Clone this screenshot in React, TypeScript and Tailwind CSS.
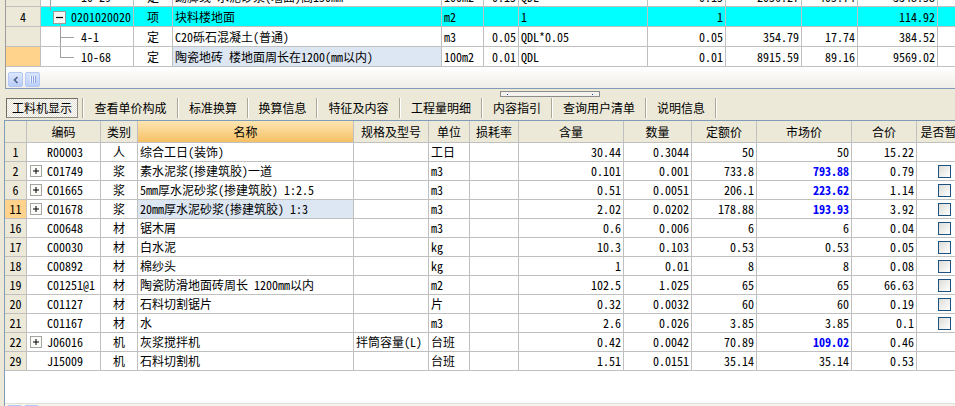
import React from 'react'

type MatRow = {
  n: string
  code: string
  plus?: boolean
  type: string
  name: string
  spec?: string
  unit: string
  hl: string
  sl: string
  de: string
  mk: string
  blue?: boolean
  total: string
  cb?: boolean
  sel?: boolean
}

const rows: MatRow[] = [
  { n: '1', code: 'R00003', type: '人', name: '综合工日(装饰)', unit: '工日', hl: '30.44', sl: '0.3044', de: '50', mk: '50', total: '15.22' },
  { n: '2', code: 'C01749', plus: true, type: '浆', name: '素水泥浆(掺建筑胶)一道', unit: 'm3', hl: '0.101', sl: '0.001', de: '733.8', mk: '793.88', blue: true, total: '0.79', cb: true },
  { n: '6', code: 'C01665', plus: true, type: '浆', name: '5mm厚水泥砂浆(掺建筑胶) 1:2.5', unit: 'm3', hl: '0.51', sl: '0.0051', de: '206.1', mk: '223.62', blue: true, total: '1.14', cb: true },
  { n: '11', code: 'C01678', plus: true, type: '浆', name: '20mm厚水泥砂浆(掺建筑胶) 1:3', unit: 'm3', hl: '2.02', sl: '0.0202', de: '178.88', mk: '193.93', blue: true, total: '3.92', cb: true, sel: true },
  { n: '16', code: 'C00648', type: '材', name: '锯木屑', unit: 'm3', hl: '0.6', sl: '0.006', de: '6', mk: '6', total: '0.04', cb: true },
  { n: '17', code: 'C00030', type: '材', name: '白水泥', unit: 'kg', hl: '10.3', sl: '0.103', de: '0.53', mk: '0.53', total: '0.05', cb: true },
  { n: '18', code: 'C00892', type: '材', name: '棉纱头', unit: 'kg', hl: '1', sl: '0.01', de: '8', mk: '8', total: '0.08', cb: true },
  { n: '19', code: 'C01251@1', type: '材', name: '陶瓷防滑地面砖周长 1200mm以内', unit: 'm2', hl: '102.5', sl: '1.025', de: '65', mk: '65', total: '66.63', cb: true },
  { n: '20', code: 'C01127', type: '材', name: '石料切割锯片', unit: '片', hl: '0.32', sl: '0.0032', de: '60', mk: '60', total: '0.19', cb: true },
  { n: '21', code: 'C01167', type: '材', name: '水', unit: 'm3', hl: '2.6', sl: '0.026', de: '3.85', mk: '3.85', total: '0.1', cb: true },
  { n: '22', code: 'J06016', plus: true, type: '机', name: '灰浆搅拌机', spec: '拌筒容量(L)', unit: '台班', hl: '0.42', sl: '0.0042', de: '70.89', mk: '109.02', blue: true, total: '0.46' },
  { n: '29', code: 'J15009', type: '机', name: '石料切割机', unit: '台班', hl: '1.51', sl: '0.0151', de: '35.14', mk: '35.14', total: '0.53' },
]

const headers = ['', '编码', '类别', '名称', '规格及型号', '单位', '损耗率', '含量', '数量', '定额价', '市场价', '合价', '是否暂定']

const tabs = [
  { label: '查看单价构成', w: 'w-[93px]' },
  { label: '标准换算', w: 'w-[68px]' },
  { label: '换算信息', w: 'w-[67px]' },
  { label: '特征及内容', w: 'w-[81px]' },
  { label: '工程量明细', w: 'w-[80px]' },
  { label: '内容指引', w: 'w-[68px]' },
  { label: '查询用户清单', w: 'w-[92px]' },
  { label: '说明信息', w: 'w-[68px]' },
]

const bottomCols = 'grid grid-cols-[22px_74px_37px_216px_75px_41px_49px_105px_68px_65px_95px_65px_56px]'
const topCols = 'grid grid-cols-[35px_93px_39px_269px_42px_35px_129px_78px_76px_56px_80px_60px]'
const cell = 'h-full border-r border-b border-[#c0c0c0] flex items-center overflow-hidden whitespace-nowrap'

function PlusBox() {
  return (
    <svg width="12" height="12" viewBox="0 0 12 12" className="shrink-0">
      <rect x="0.5" y="0.5" width="11" height="11" fill="#fbfbf9" stroke="#a5a5a0" />
      <path d="M3 6h6M6 3v6" stroke="#000" strokeWidth="1" />
    </svg>
  )
}

function MinusBox() {
  return (
    <svg width="13" height="13" viewBox="0 0 13 13">
      <rect x="0.5" y="0.5" width="12" height="12" fill="#f6f6f3" stroke="#9d9d98" />
      <path d="M3 6.5h7" stroke="#000" strokeWidth="1.2" />
    </svg>
  )
}

function CheckBox() {
  return (
    <span className="w-[13px] h-[13px] border border-[#1c5180] bg-linear-to-br from-[#dcdcd7] to-white" />
  )
}

function ScrollBar() {
  return (
    <div className="flex items-end gap-[2px] pl-[2px] h-full">
      <div className="w-[15px] h-[15px] rounded-[2px] border border-[#b4c8f6] bg-linear-to-b from-[#dde7fd] to-[#b9cdf8] flex items-center justify-center">
        <svg width="8" height="8" viewBox="0 0 8 8">
          <path d="M5.5 1L2.5 4l3 3" fill="none" stroke="#4d6185" strokeWidth="1.6" />
        </svg>
      </div>
      <div className="w-[15px] h-[15px] rounded-[2px] border border-[#b4c8f6] bg-linear-to-b from-[#dae4fd] to-[#bccff9] flex items-center justify-center">
        <svg width="8" height="7" viewBox="0 0 8 7">
          <path d="M1.5 0v7M3.5 0v7M5.5 0v7" stroke="#eef3fe" strokeWidth="1" />
          <path d="M2.5 0v7M4.5 0v7M6.5 0v7" stroke="#8aa4e0" strokeWidth="1" />
        </svg>
      </div>
    </div>
  )
}

export default function App() {
  return (
    <div className="w-[955px] h-[406px] overflow-hidden bg-[#ece9d8] text-[12px] leading-none text-black font-['Noto_Sans_Mono_CJK_SC','Noto_Sans_CJK_SC',monospace]">
      {/* 上方清单 */}
      <div className="ml-[5px] h-[89px] border-l border-l-[#9c9c9c] border-b border-b-[#7f9db9] bg-white flex flex-col">
        <div className="h-[67px] overflow-hidden">
          <div className="-mt-[13px]">
            <div className={`${topCols} h-[20px]`}>
              <div className={`${cell} bg-[#ece9d8]`} />
              <div className={`${cell} relative pl-[40px]`}>
                <span className="absolute left-[9px] top-0 bottom-0 w-px bg-[#a0a0a0]" />
                10-29
              </div>
              <div className={`${cell} justify-center`}>定</div>
              <div className={`${cell} pl-[2px]`}>踢脚线 水泥砂浆(墙面)高150mm</div>
              <div className={`${cell} pl-[2px]`}>100m2</div>
              <div className={`${cell} justify-end pr-[2px]`}>0.15</div>
              <div className={`${cell} pl-[2px]`}>QDL</div>
              <div className={`${cell} justify-end pr-[2px]`}>0.15</div>
              <div className={`${cell} justify-end pr-[2px]`}>2056.27</div>
              <div className={`${cell} justify-end pr-[2px]`}>405.74</div>
              <div className={`${cell} justify-end pr-[2px]`}>3348.58</div>
              <div className={cell} />
            </div>
            <div className={`${topCols} h-[20px] bg-[#00ffff]`}>
              <div className={`${cell} bg-[#ece9d8] justify-center`}>4</div>
              <div className={`${cell} relative pl-[30px]`}>
                <span className="absolute left-[9px] top-0 h-[4px] w-px bg-[#a0a0a0]" />
                <span className="absolute left-[12px] top-[4px]">
                  <MinusBox />
                </span>
                <span className="absolute left-[19px] top-[17px] bottom-0 w-px bg-[#a0a0a0]" />
                0201020020
              </div>
              <div className={`${cell} justify-center`}>项</div>
              <div className={`${cell} pl-[2px]`}>块料楼地面</div>
              <div className={`${cell} pl-[2px]`}>m2</div>
              <div className={cell} />
              <div className={`${cell} pl-[2px]`}>1</div>
              <div className={`${cell} justify-end pr-[2px]`}>1</div>
              <div className={cell} />
              <div className={cell} />
              <div className={`${cell} justify-end pr-[2px]`}>114.92</div>
              <div className={cell} />
            </div>
            <div className={`${topCols} h-[20px]`}>
              <div className={`${cell} bg-[#ece9d8]`} />
              <div className={`${cell} relative pl-[40px]`}>
                <span className="absolute left-[19px] top-0 bottom-0 w-px bg-[#a0a0a0]" />
                <span className="absolute left-[19px] top-[10px] w-[14px] h-px bg-[#a0a0a0]" />
                4-1
              </div>
              <div className={`${cell} justify-center`}>定</div>
              <div className={`${cell} pl-[2px]`}>C20砾石混凝土(普通)</div>
              <div className={`${cell} pl-[2px]`}>m3</div>
              <div className={`${cell} justify-end pr-[2px]`}>0.05</div>
              <div className={`${cell} pl-[2px]`}>QDL*0.05</div>
              <div className={`${cell} justify-end pr-[2px]`}>0.05</div>
              <div className={`${cell} justify-end pr-[2px]`}>354.79</div>
              <div className={`${cell} justify-end pr-[2px]`}>17.74</div>
              <div className={`${cell} justify-end pr-[2px]`}>384.52</div>
              <div className={cell} />
            </div>
            <div className={`${topCols} h-[20px]`}>
              <div className={`${cell} bg-[#ffd38c]`} />
              <div className={`${cell} relative pl-[40px]`}>
                <span className="absolute left-[19px] top-0 h-[10px] w-px bg-[#a0a0a0]" />
                <span className="absolute left-[19px] top-[10px] w-[14px] h-px bg-[#a0a0a0]" />
                10-68
              </div>
              <div className={`${cell} justify-center`}>定</div>
              <div className={`${cell} pl-[2px] bg-[#dde6f3]`}>陶瓷地砖 楼地面周长在1200(mm以内)</div>
              <div className={`${cell} pl-[2px]`}>100m2</div>
              <div className={`${cell} justify-end pr-[2px]`}>0.01</div>
              <div className={`${cell} pl-[2px]`}>QDL</div>
              <div className={`${cell} justify-end pr-[2px]`}>0.01</div>
              <div className={`${cell} justify-end pr-[2px]`}>8915.59</div>
              <div className={`${cell} justify-end pr-[2px]`}>89.16</div>
              <div className={`${cell} justify-end pr-[2px]`}>9569.02</div>
              <div className={cell} />
            </div>
          </div>
        </div>
        {/* 横向滚动条 */}
        <div className="h-[21px] pb-[1px] bg-linear-to-b from-white to-[#efeee7]">
          <ScrollBar />
        </div>
      </div>

      {/* 分隔条 + 页签 */}
      <div className="h-[31px] pt-[2px]">
        <div className="ml-[500px] w-[100px] h-[6px] border border-[#8c8c8c] bg-[#f3f2ec] flex items-center justify-between px-[6px]">
          <span className="w-px h-px bg-[#1f3fbf]" />
          <span className="w-px h-px bg-[#1f3fbf]" />
        </div>
        <div className="mt-[1px] h-[21px] flex items-stretch">
          <div className="ml-[6px] w-[72px] h-[20px] border border-[#8e8c82] border-t-[#716f64] border-l-[#716f64] bg-[repeating-conic-gradient(#ffffff_0_25%,#e4e1d4_0_50%)] bg-[length:2px_2px] flex items-center justify-center">
            工料机显示
          </div>
          <div className="w-[4px]" />
          {tabs.map(t => (
            <React.Fragment key={t.label}>
              <div className="flex h-[20px]">
                <span className="w-px bg-[#aca899]" />
                <span className="w-px bg-white" />
              </div>
              <div className={`${t.w} h-[20px] flex items-center justify-center`}>{t.label}</div>
            </React.Fragment>
          ))}
          <div className="flex h-[20px]">
            <span className="w-px bg-[#aca899]" />
            <span className="w-px bg-white" />
          </div>
        </div>
      </div>

      {/* 工料机表格 */}
      <div className="ml-[4px] border-l border-t border-[#7f9db9] bg-white">
        <div className={`${bottomCols} h-[22px] bg-[#ece9d8]`}>
          {headers.map((h, i) => (
            <div
              key={i}
              className={`${cell} justify-center ${
                i === 3 ? 'bg-linear-to-b from-[#fde5b2] to-[#f6c062]' : ''
              }`}
            >
              {h}
            </div>
          ))}
        </div>
        <div className="h-[260px]">
          {rows.map(r => (
            <div key={r.n} className={`${bottomCols} h-[19px]`}>
              <div className={`${cell} justify-center ${r.sel ? 'bg-[#ffd38c]' : 'bg-[#ece9d8]'}`}>{r.n}</div>
              <div className={`${cell} pl-[3px]`}>
                <span className="w-[17px] shrink-0">{r.plus && <PlusBox />}</span>
                {r.code}
              </div>
              <div className={`${cell} justify-center`}>{r.type}</div>
              <div className={`${cell} pl-[2px] ${r.sel ? 'bg-[#dde6f3]' : ''}`}>{r.name}</div>
              <div className={`${cell} pl-[2px]`}>{r.spec}</div>
              <div className={`${cell} pl-[2px]`}>{r.unit}</div>
              <div className={cell} />
              <div className={`${cell} justify-end pr-[2px]`}>{r.hl}</div>
              <div className={`${cell} justify-end pr-[2px]`}>{r.sl}</div>
              <div className={`${cell} justify-end pr-[2px]`}>{r.de}</div>
              <div className={`${cell} justify-end pr-[2px] ${r.blue ? 'text-[#0000ff] font-bold' : ''}`}>{r.mk}</div>
              <div className={`${cell} justify-end pr-[2px]`}>{r.total}</div>
              <div className={`${cell} justify-center`}>{r.cb && <CheckBox />}</div>
            </div>
          ))}
        </div>
        <div className="h-[17px] border-t border-[#e2e0d6] bg-[#f4f3ee]">
          <div className="flex gap-[2px] pl-[2px] pt-[1px]">
            <div className="w-[15px] h-[15px] rounded-[2px] border border-[#b4c8f6] bg-[#cddbfb]" />
            <div className="w-[15px] h-[15px] rounded-[2px] border border-[#b4c8f6] bg-[#cddbfb]" />
          </div>
        </div>
      </div>
    </div>
  )
}
